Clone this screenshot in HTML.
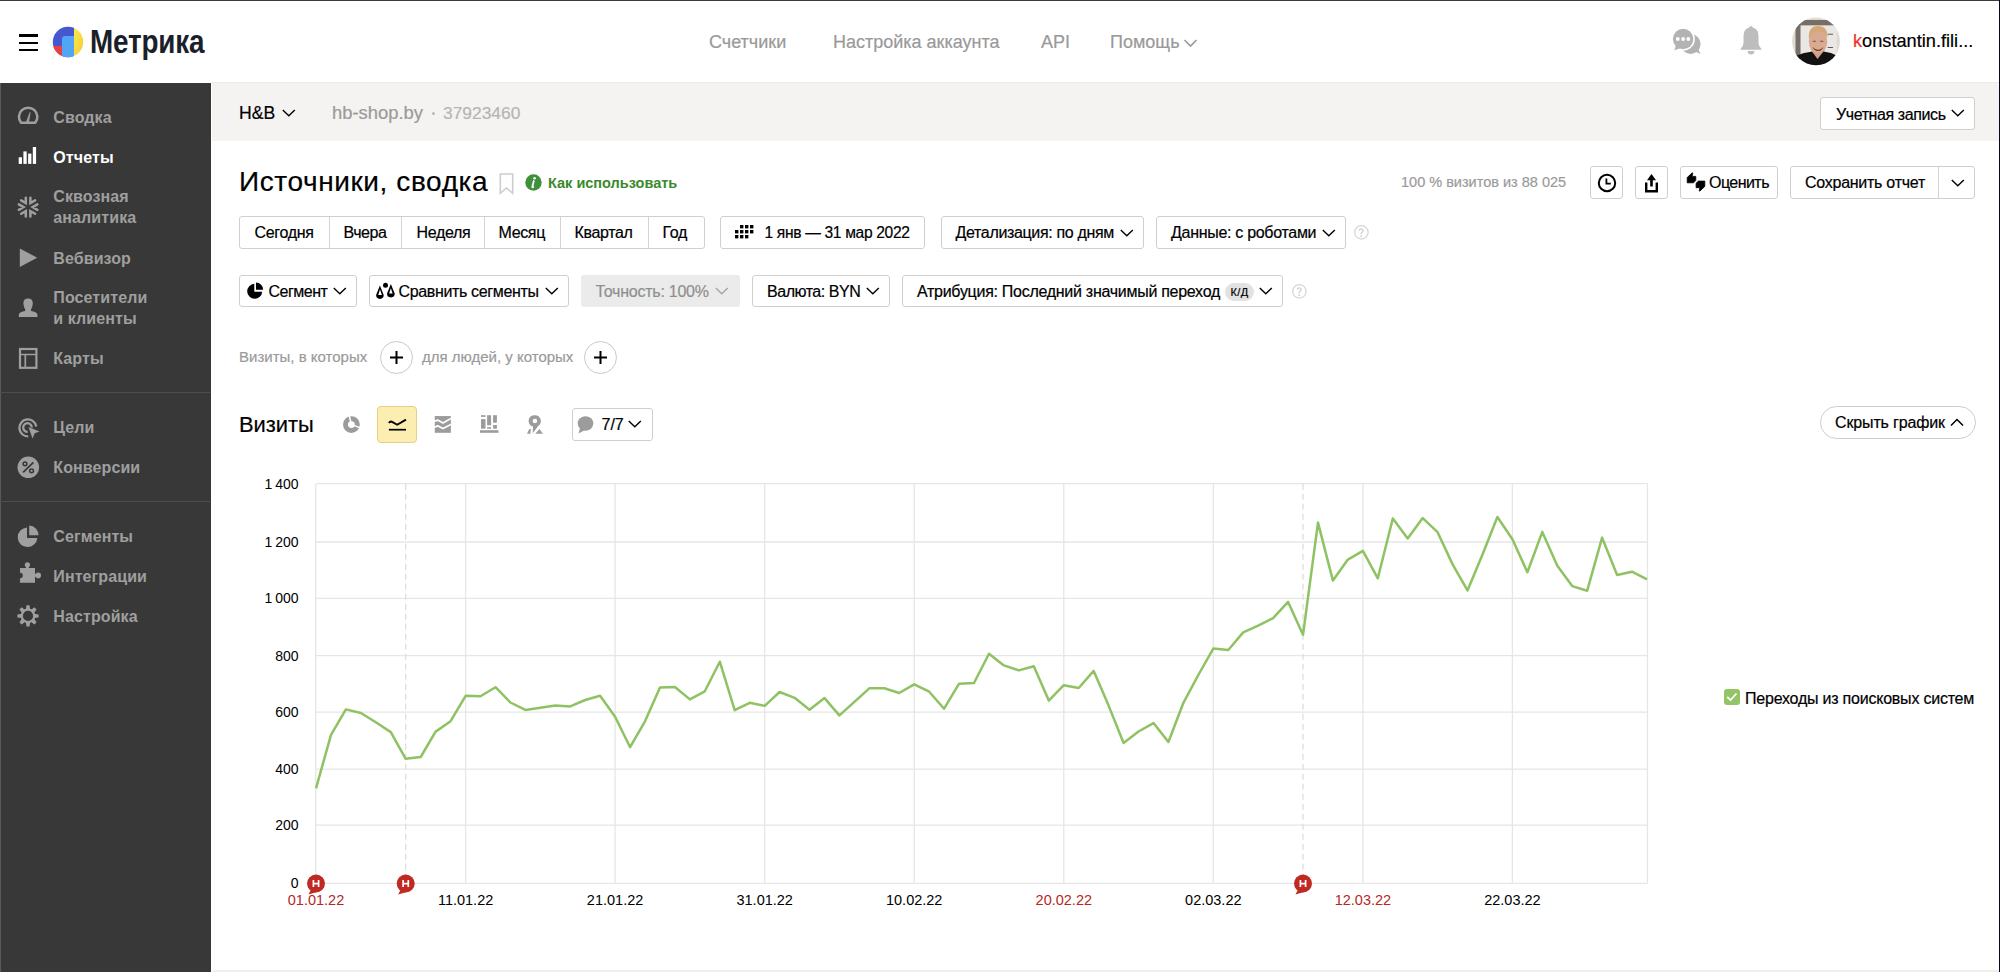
<!DOCTYPE html>
<html><head><meta charset="utf-8">
<style>
*{box-sizing:border-box}
html,body{-webkit-text-stroke:0.2px currentColor;margin:0;padding:0;width:2000px;height:972px;overflow:hidden;background:#fff;font-family:"Liberation Sans",sans-serif;color:#000}
.a{position:absolute;white-space:nowrap}
#frame-top{position:absolute;left:0;top:0;width:2000px;height:1px;background:#3a3a44}
#frame-right{position:absolute;right:0;top:0;width:1px;height:972px;background:#0b0620}
#header{position:absolute;left:0;top:1px;width:2000px;height:81px;background:#fff}
#sidebar{position:absolute;left:0;top:83px;width:211px;height:889px;background:#383838;border-left:1px solid #5a5a5a}
#bar{position:absolute;left:212px;top:82px;width:1787px;height:59px;background:#f4f3f1;border-top:1px solid #ebebeb}
.nav{font-size:18px;color:#999}
.side{-webkit-text-stroke:0;font-size:16px;font-weight:bold;color:#9f9f9f;letter-spacing:0.1px}
.btn{position:absolute;border:1px solid #cfcfcf;border-radius:3px;background:#fff;font-size:16px;white-space:nowrap}
.chev{display:inline-block;width:8px;height:8px;border-right:1.5px solid #000;border-bottom:1.5px solid #000;transform:rotate(45deg)}
</style></head><body>
<div id="frame-top"></div>
<div id="header">
<div class="a" style="left:19px;top:33.4px;width:19px;height:2.5px;background:#000"></div>
<div class="a" style="left:19px;top:40.6px;width:19px;height:2.5px;background:#000"></div>
<div class="a" style="left:19px;top:47.9px;width:19px;height:2.5px;background:#000"></div>
<svg class="a" style="left:52px;top:25.3px" width="32" height="32" viewBox="0 0 32 32">
<defs><clipPath id="lc"><circle cx="16" cy="16" r="15.2"/></clipPath>
<linearGradient id="ly" x1="0" y1="0" x2="1" y2="1"><stop offset="0" stop-color="#ffe94a"/><stop offset="1" stop-color="#f0c83a"/></linearGradient></defs>
<g clip-path="url(#lc)">
<rect x="0" y="0" width="22" height="32" fill="#4657cf"/>
<rect x="0" y="20" width="12" height="12" fill="#e8413f"/>
<path d="M10 32 V13 Q10 10 13 10 H22 V32 Z" fill="#50a6f5"/>
<rect x="22" y="0" width="10" height="32" fill="url(#ly)"/>
</g></svg>
<div class="a" style="left:90px;top:21.5px;-webkit-text-stroke:0;font-size:32.8px;font-weight:bold;color:#1b1f2a;transform:scaleX(0.85);transform-origin:0 0;letter-spacing:-0.2px">Метрика</div>
<div class="a nav" style="left:709px;top:31px">Счетчики</div>
<div class="a nav" style="left:833px;top:31px">Настройка аккаунта</div>
<div class="a nav" style="left:1041px;top:31px">API</div>
<div class="a nav" style="left:1110px;top:31px">Помощь</div>
<svg class="a" style="left:1183px;top:37px" width="15" height="10" viewBox="0 0 15 10"><path d="M1.5 2 L7.5 8 L13.5 2" fill="none" stroke="#999" stroke-width="1.6"/></svg>
</div>
<div id="sidebar"></div><div class="a" style="left:0;top:0">
<svg class="a" style="left:16px;top:105px" width="24" height="21" viewBox="0 0 24 21"><path d="M5.01 17.65 A9.2 9.2 0 1 1 19.29 17.65 Z" fill="none" stroke="#9f9f9f" stroke-width="2.5" stroke-linejoin="round"/><path d="M9.9 17.6 L13.6 7.4 Q14.2 6.9 14.6 7.5 L12.9 17.6 Z" fill="#9f9f9f"/></svg>
<div class="a side" style="left:53.3px;top:109px">Сводка</div>
<svg class="a" style="left:18px;top:147px" width="19" height="18" viewBox="0 0 19 18"><rect x="0.7" y="10.3" width="3.3" height="6.6" fill="#fff"/><rect x="5.4" y="4.4" width="3.3" height="12.5" fill="#fff"/><rect x="10.1" y="6.6" width="3.3" height="10.3" fill="#fff"/><rect x="14.8" y="0" width="3.3" height="16.9" fill="#fff"/></svg>
<div class="a side" style="left:53.3px;top:149px;color:#fff">Отчеты</div>
<svg class="a" style="left:14px;top:193px" width="28" height="28" viewBox="0 0 28 28"><path d="M23.38 11.40 L18.70 14.10 L23.38 16.80 M21.08 20.78 L16.40 18.08 L16.40 23.48 M11.80 23.48 L11.80 18.08 L7.12 20.78 M4.82 16.80 L9.50 14.10 L4.82 11.40 M7.12 7.42 L11.80 10.12 L11.80 4.72 M16.40 4.72 L16.40 10.12 L21.08 7.42 " fill="none" stroke="#9f9f9f" stroke-width="2.5" stroke-linecap="round" stroke-linejoin="miter"/></svg>
<div class="a side" style="left:53.3px;top:186.3px;line-height:21px">Сквозная<br>аналитика</div>
<svg class="a" style="left:19px;top:248px" width="19" height="20" viewBox="0 0 19 20"><path d="M0.8 0.4 L18.2 9.7 L0.8 19 Z" fill="#9f9f9f"/></svg>
<div class="a side" style="left:53.3px;top:250px">Вебвизор</div>
<svg class="a" style="left:14px;top:294px" width="28" height="28" viewBox="0 0 28 28"><path d="M14.1 4.6 Q18.9 4.6 18.8 9.5 Q18.6 13 17 15.5 L17 16.9 Q22.8 18 23.3 20 L23.5 23 H4.75 L4.9 20 Q5.5 18 11.2 16.9 L11.2 15.5 Q9.6 13 9.4 9.5 Q9.3 4.6 14.1 4.6 Z" fill="#9f9f9f"/></svg>
<div class="a side" style="left:53.3px;top:287.2px;line-height:21px">Посетители<br>и клиенты</div>
<svg class="a" style="left:14px;top:344px" width="28" height="28" viewBox="0 0 28 28"><rect x="6" y="5" width="16.4" height="18.8" fill="none" stroke="#9f9f9f" stroke-width="2.2"/><path d="M6 10.5 H22.4" stroke="#9f9f9f" stroke-width="1.5"/><path d="M11.3 10.5 V23.8" stroke="#9f9f9f" stroke-width="1.7"/></svg>
<div class="a side" style="left:53.3px;top:350px">Карты</div>
<div class="a" style="left:0;top:392px;width:210px;height:1.2px;background:#4e4e4e"></div>
<svg class="a" style="left:16.8px;top:416.5px" width="24" height="23" viewBox="0 0 24 23"><path d="M19.3 9.5 A8.5 8.5 0 1 0 11.2 19.4" fill="none" stroke="#9f9f9f" stroke-width="2.3"/><path d="M14.8 10.5 A4.3 4.3 0 1 0 10.6 14.8" fill="none" stroke="#9f9f9f" stroke-width="2.3"/><path d="M11.5 10 L22.5 14.5 L17.7 16.2 L15.5 21.5 Z" fill="#9f9f9f"/></svg>
<div class="a side" style="left:53.3px;top:419px">Цели</div>
<svg class="a" style="left:17px;top:456px" width="23" height="23" viewBox="0 0 23 23"><circle cx="11.3" cy="11.3" r="10.8" fill="#9f9f9f"/><path d="M6.1 16.4 L16.4 6.4" stroke="#383838" stroke-width="1.7"/><circle cx="8" cy="7.8" r="1.9" fill="none" stroke="#383838" stroke-width="1.5"/><circle cx="14.6" cy="14.8" r="1.9" fill="none" stroke="#383838" stroke-width="1.5"/></svg>
<div class="a side" style="left:53.3px;top:459px">Конверсии</div>
<div class="a" style="left:0;top:501px;width:210px;height:1.2px;background:#4e4e4e"></div>
<svg class="a" style="left:17px;top:525px" width="23" height="23" viewBox="0 0 23 23"><path d="M10 2.5 A9.8 9.8 0 1 0 20.3 13 L10 13 Z" fill="#9f9f9f"/><path d="M12.2 0.6 A9.6 9.6 0 0 1 21.5 10.3 L12.2 10.3 Z" fill="#9f9f9f"/></svg>
<div class="a side" style="left:53.3px;top:528px">Сегменты</div>
<svg class="a" style="left:14px;top:558px" width="30" height="30" viewBox="0 0 30 30"><circle cx="13.4" cy="6.8" r="2.6" fill="#9f9f9f"/><rect x="12" y="8" width="2.8" height="3" fill="#9f9f9f"/><circle cx="24.2" cy="17.4" r="2.8" fill="#9f9f9f"/><rect x="20" y="16" width="3" height="2.8" fill="#9f9f9f"/><path d="M6 9.9 H21 V24.8 H6 V20.4 A2.8 2.8 0 0 0 6 14.8 Z" fill="#9f9f9f"/></svg>
<div class="a side" style="left:53.3px;top:568px">Интеграции</div>
<svg class="a" style="left:14px;top:600px" width="30" height="30" viewBox="0 0 30 30"><g fill="#9f9f9f"><path d="M-2.2 -6 L-1.5 -10.6 H1.5 L2.2 -6 Z" transform="translate(14.0,15.9) rotate(0)"/><path d="M-2.2 -6 L-1.5 -10.6 H1.5 L2.2 -6 Z" transform="translate(14.0,15.9) rotate(45)"/><path d="M-2.2 -6 L-1.5 -10.6 H1.5 L2.2 -6 Z" transform="translate(14.0,15.9) rotate(90)"/><path d="M-2.2 -6 L-1.5 -10.6 H1.5 L2.2 -6 Z" transform="translate(14.0,15.9) rotate(135)"/><path d="M-2.2 -6 L-1.5 -10.6 H1.5 L2.2 -6 Z" transform="translate(14.0,15.9) rotate(180)"/><path d="M-2.2 -6 L-1.5 -10.6 H1.5 L2.2 -6 Z" transform="translate(14.0,15.9) rotate(225)"/><path d="M-2.2 -6 L-1.5 -10.6 H1.5 L2.2 -6 Z" transform="translate(14.0,15.9) rotate(270)"/><path d="M-2.2 -6 L-1.5 -10.6 H1.5 L2.2 -6 Z" transform="translate(14.0,15.9) rotate(315)"/></g><circle cx="14.0" cy="15.9" r="6.2" fill="none" stroke="#9f9f9f" stroke-width="2.2"/></svg>
<div class="a side" style="left:53.3px;top:608px">Настройка</div>
</div>
<div id="bar"></div>

<!-- gray bar -->
<div class="a" style="left:239px;top:102.5px;font-size:17.6px;color:#000">H&amp;B</div>
<svg class="a" style="left:281.5px;top:109px" width="14" height="8" viewBox="0 0 14 8"><path d="M0.8 1 L6.8 6.8 L12.8 1" fill="none" stroke="#000" stroke-width="1.4"/></svg>
<div class="a" style="left:332px;top:102px;font-size:18.4px;color:#9a9a9a">hb-shop.by</div>
<div class="a" style="left:432px;top:112px;width:3px;height:3px;border-radius:50%;background:#b8b8b8"></div>
<div class="a" style="left:443px;top:102.5px;font-size:17.4px;color:#b5b5b5">37923460</div>
<div class="btn" style="left:1820px;top:97px;width:155px;height:33px"></div>
<div class="a" style="left:1836px;top:105.5px;font-size:16px;letter-spacing:-0.4px">Учетная запись</div>
<svg class="a" style="left:1950.5px;top:109px" width="14" height="8" viewBox="0 0 14 8"><path d="M0.8 1 L6.8 6.8 L12.8 1" fill="none" stroke="#000" stroke-width="1.4"/></svg>
<!-- title row -->
<div class="a" style="left:239px;top:165.5px;font-size:28px;letter-spacing:0.6px">Источники, сводка</div>
<svg class="a" style="left:499px;top:173px" width="15" height="22" viewBox="0 0 15 22"><path d="M1.3 1 H13.7 V20.3 L7.5 15 L1.3 20.3 Z" fill="none" stroke="#cdcdcd" stroke-width="1.6"/></svg>
<svg class="a" style="left:525px;top:174px" width="17" height="17" viewBox="0 0 17 17"><circle cx="8.5" cy="8.5" r="8.2" fill="#3f8f3c"/><circle cx="9.6" cy="4.3" r="1.3" fill="#fff"/><path d="M8.8 7 L7.3 12.8 Q7 13.8 8.3 13" fill="none" stroke="#fff" stroke-width="1.8" stroke-linecap="round"/></svg>
<div class="a" style="left:548px;top:175px;-webkit-text-stroke:0;font-size:14.5px;font-weight:bold;color:#3a8a2c">Как использовать</div>
<div class="a" style="left:1401px;top:174px;font-size:14.5px;color:#9a9a9a">100 % визитов из 88 025</div>
<div class="btn" style="left:1590px;top:166px;width:33px;height:33px"></div>
<svg class="a" style="left:1597px;top:173px" width="20" height="20" viewBox="0 0 20 20"><circle cx="10" cy="10" r="8.2" fill="none" stroke="#000" stroke-width="2"/><path d="M9.4 5.5 V10.6 H13.8" fill="none" stroke="#000" stroke-width="1.8"/></svg>
<div class="btn" style="left:1635px;top:166px;width:33px;height:33px"></div>
<svg class="a" style="left:1644px;top:173px" width="15" height="21" viewBox="0 0 15 21"><path d="M7.5 1 L12 7.3 H3 Z" fill="#000"/><rect x="6.2" y="6.5" width="2.6" height="7" fill="#000"/><path d="M2.2 9.5 V18.2 H12.8 V9.5" fill="none" stroke="#000" stroke-width="2.4"/></svg>
<div class="btn" style="left:1680px;top:166px;width:98px;height:33px"></div>
<svg class="a" style="left:1682px;top:168px" width="30" height="28" viewBox="0 0 30 28"><path d="M5.2 9.5 L10 5 Q10.9 4.5 10.7 5.6 L10.1 8.4 H13.8 V12.4 L11.5 14.8 H5.2 Z" fill="#000" stroke="#000" stroke-width="0.8" stroke-linejoin="round"/><path d="M22.8 18.4 L18 23 Q17.1 23.5 17.3 22.4 L17.9 19.7 H14.1 V15.3 L16.4 13.1 H22.8 Z" fill="#000" stroke="#000" stroke-width="0.8" stroke-linejoin="round"/></svg>
<div class="a" style="left:1709px;top:174px;font-size:16px;letter-spacing:-0.55px">Оценить</div>
<div class="btn" style="left:1790px;top:166px;width:185px;height:33px"></div>
<div class="a" style="left:1938px;top:167px;width:1px;height:31px;background:#d4d4d4"></div>
<div class="a" style="left:1805px;top:174px;font-size:16px;letter-spacing:-0.26px">Сохранить отчет</div>
<svg class="a" style="left:1950.5px;top:179px" width="14" height="8" viewBox="0 0 14 8"><path d="M0.8 1 L6.8 6.8 L12.8 1" fill="none" stroke="#000" stroke-width="1.4"/></svg>
<!-- row 2 -->
<div class="btn" style="left:239px;top:216px;width:466px;height:33px"></div>
<div class="a" style="left:329px;top:217px;width:1px;height:31px;background:#d4d4d4"></div>
<div class="a" style="left:401px;top:217px;width:1px;height:31px;background:#d4d4d4"></div>
<div class="a" style="left:484px;top:217px;width:1px;height:31px;background:#d4d4d4"></div>
<div class="a" style="left:560px;top:217px;width:1px;height:31px;background:#d4d4d4"></div>
<div class="a" style="left:648px;top:217px;width:1px;height:31px;background:#d4d4d4"></div>
<div class="a" style="left:254.5px;top:224px;font-size:16px;letter-spacing:-0.33px">Сегодня</div>
<div class="a" style="left:343.5px;top:224px;font-size:16px;letter-spacing:-0.45px">Вчера</div>
<div class="a" style="left:416.5px;top:224px;font-size:16px;letter-spacing:-0.35px">Неделя</div>
<div class="a" style="left:498.5px;top:224px;font-size:16px;letter-spacing:-0.35px">Месяц</div>
<div class="a" style="left:574.5px;top:224px;font-size:16px;letter-spacing:-0.35px">Квартал</div>
<div class="a" style="left:662.5px;top:224px;font-size:16px;letter-spacing:-0.35px">Год</div>
<div class="btn" style="left:720px;top:216px;width:205px;height:33px"></div>
<svg class="a" style="left:735px;top:225px" width="19" height="14" viewBox="0 0 19 14"><g fill="#000"><rect x="5.0" y="0.0" width="3.4" height="3.4"/><rect x="10.0" y="0.0" width="3.4" height="3.4"/><rect x="15.0" y="0.0" width="3.4" height="3.4"/><rect x="0.0" y="5.0" width="3.4" height="3.4"/><rect x="5.0" y="5.0" width="3.4" height="3.4"/><rect x="10.0" y="5.0" width="3.4" height="3.4"/><rect x="15.0" y="5.0" width="3.4" height="3.4"/><rect x="0.0" y="10.0" width="3.4" height="3.4"/><rect x="5.0" y="10.0" width="3.4" height="3.4"/><rect x="10.0" y="10.0" width="3.4" height="3.4"/></g></svg>
<div class="a" style="left:764.5px;top:223.5px;font-size:15.6px;letter-spacing:-0.33px">1 янв — 31 мар 2022</div>
<div class="btn" style="left:941px;top:216px;width:203px;height:33px"></div>
<div class="a" style="left:955.5px;top:224px;font-size:16px;letter-spacing:-0.34px">Детализация: по дням</div>
<svg class="a" style="left:1120px;top:229px" width="14" height="8" viewBox="0 0 14 8"><path d="M0.8 1 L6.8 6.8 L12.8 1" fill="none" stroke="#000" stroke-width="1.4"/></svg>
<div class="btn" style="left:1156px;top:216px;width:190px;height:33px"></div>
<div class="a" style="left:1171px;top:224px;font-size:16px;letter-spacing:-0.3px">Данные: с роботами</div>
<svg class="a" style="left:1322px;top:229px" width="14" height="8" viewBox="0 0 14 8"><path d="M0.8 1 L6.8 6.8 L12.8 1" fill="none" stroke="#000" stroke-width="1.4"/></svg>
<svg class="a" style="left:1353px;top:225px" width="16" height="16" viewBox="0 0 16 16"><circle cx="8.4" cy="7.4" r="6.7" fill="none" stroke="#d6d6d6" stroke-width="1.3"/><path d="M6.3 5.6 Q6.4 3.8 8.3 3.8 Q10.1 3.9 10.1 5.5 Q10.1 6.5 9.1 7.2 Q8.1 7.9 8.1 9.3" fill="none" stroke="#d0d0d0" stroke-width="1.3"/><circle cx="8.1" cy="11.2" r="0.85" fill="#d0d0d0"/></svg>
<!-- row 3 -->
<div class="btn" style="left:239px;top:275px;width:118px;height:32px"></div>
<svg class="a" style="left:247px;top:282px" width="17" height="18" viewBox="0 0 17 18"><path d="M7.3 1.8 A7.5 7.5 0 1 0 15.2 9.8 L7.3 9.8 Z" fill="#000"/><path d="M9 0.5 A7.2 7.2 0 0 1 16.2 7.8 L9 7.8 Z" fill="#000"/></svg>
<div class="a" style="left:268.5px;top:283px;font-size:16px;letter-spacing:-0.5px">Сегмент</div>
<svg class="a" style="left:333px;top:287px" width="14" height="8" viewBox="0 0 14 8"><path d="M0.8 1 L6.8 6.8 L12.8 1" fill="none" stroke="#000" stroke-width="1.4"/></svg>
<div class="btn" style="left:369px;top:275px;width:200px;height:32px"></div>
<svg class="a" style="left:372px;top:278px" width="26" height="26" viewBox="0 0 26 26"><circle cx="13.5" cy="7.35" r="2.5" fill="#000"/><path d="M7.9 7.6 L4.10 17.1 A3.8 3.8 0 0 0 11.70 17.1 Z" fill="#000"/><path d="M8 11.5 L6.2 17.1 H9.9 Z" fill="#fff"/><path d="M18.85 6.1 L15.00 15.6 A3.85 3.85 0 0 0 22.70 15.6 Z" fill="#000"/><path d="M18.85 10.2 L17.1 15.5 H20.6 Z" fill="#fff"/></svg>
<div class="a" style="left:398.5px;top:283px;font-size:16px;letter-spacing:-0.35px">Сравнить сегменты</div>
<svg class="a" style="left:544.5px;top:287px" width="14" height="8" viewBox="0 0 14 8"><path d="M0.8 1 L6.8 6.8 L12.8 1" fill="none" stroke="#000" stroke-width="1.4"/></svg>
<div class="a" style="left:581px;top:275px;width:159px;height:32px;background:#ebebeb;border-radius:3px"></div>
<div class="a" style="left:595.5px;top:283px;font-size:16px;letter-spacing:-0.24px;color:#8f8f8f">Точность: 100%</div>
<svg class="a" style="left:714.5px;top:287px" width="14" height="8" viewBox="0 0 14 8"><path d="M0.8 1 L6.8 6.8 L12.8 1" fill="none" stroke="#a5a5a5" stroke-width="1.4"/></svg>
<div class="btn" style="left:752px;top:275px;width:138px;height:32px"></div>
<div class="a" style="left:767px;top:283px;font-size:16px;letter-spacing:-0.47px">Валюта: BYN</div>
<svg class="a" style="left:865.5px;top:287px" width="14" height="8" viewBox="0 0 14 8"><path d="M0.8 1 L6.8 6.8 L12.8 1" fill="none" stroke="#000" stroke-width="1.4"/></svg>
<div class="btn" style="left:902px;top:275px;width:381px;height:32px"></div>
<div class="a" style="left:917px;top:283px;font-size:16px;letter-spacing:-0.28px">Атрибуция: Последний значимый переход</div>
<div class="a" style="left:1225px;top:283.3px;width:29px;height:17.5px;border-radius:9px;background:#e2e2e2;font-size:11px;text-align:center;line-height:18px;letter-spacing:0.3px">К/Д</div>
<svg class="a" style="left:1258.5px;top:287px" width="14" height="8" viewBox="0 0 14 8"><path d="M0.8 1 L6.8 6.8 L12.8 1" fill="none" stroke="#000" stroke-width="1.4"/></svg>
<svg class="a" style="left:1291px;top:284px" width="16" height="16" viewBox="0 0 16 16"><circle cx="8.4" cy="7.4" r="6.7" fill="none" stroke="#d6d6d6" stroke-width="1.3"/><path d="M6.3 5.6 Q6.4 3.8 8.3 3.8 Q10.1 3.9 10.1 5.5 Q10.1 6.5 9.1 7.2 Q8.1 7.9 8.1 9.3" fill="none" stroke="#d0d0d0" stroke-width="1.3"/><circle cx="8.1" cy="11.2" r="0.85" fill="#d0d0d0"/></svg>
<!-- row 4 -->
<div class="a" style="left:239px;top:348px;font-size:15px;color:#9a9a9a">Визиты, в которых</div>
<div class="a" style="left:380px;top:341px;width:33px;height:33px;border:1.2px solid #c9c9c9;border-radius:50%"></div>
<svg class="a" style="left:388.5px;top:350.2px" width="15" height="15" viewBox="0 0 15 15"><path d="M7.5 1 V14 M1 7.5 H14" stroke="#000" stroke-width="2"/></svg>
<div class="a" style="left:422px;top:348px;font-size:15px;color:#9a9a9a">для людей, у которых</div>
<div class="a" style="left:584px;top:341px;width:33px;height:33px;border:1.2px solid #c9c9c9;border-radius:50%"></div>
<svg class="a" style="left:592.5px;top:350.2px" width="15" height="15" viewBox="0 0 15 15"><path d="M7.5 1 V14 M1 7.5 H14" stroke="#000" stroke-width="2"/></svg>
<!-- row 5 -->
<div class="a" style="left:239px;top:411.5px;font-size:21.9px">Визиты</div>
<svg class="a" style="left:0;top:0" width="2000" height="972" viewBox="0 0 2000 972" font-family="Liberation Sans">
<path d="M316 883.3 H1647.5" stroke="#e6e6e6" stroke-width="1.3"/><path d="M316 825.2 H1647.5" stroke="#e6e6e6" stroke-width="1.3"/><path d="M316 769.2 H1647.5" stroke="#e6e6e6" stroke-width="1.3"/><path d="M316 712.2 H1647.5" stroke="#e6e6e6" stroke-width="1.3"/><path d="M316 655.6 H1647.5" stroke="#e6e6e6" stroke-width="1.3"/><path d="M316 598.4 H1647.5" stroke="#e6e6e6" stroke-width="1.3"/><path d="M316 542.0 H1647.5" stroke="#e6e6e6" stroke-width="1.3"/><path d="M316 483.7 H1647.5" stroke="#e6e6e6" stroke-width="1.3"/><path d="M465.6 483.7 V883.3" stroke="#e6e6e6" stroke-width="1.3"/><path d="M615.1 483.7 V883.3" stroke="#e6e6e6" stroke-width="1.3"/><path d="M764.7 483.7 V883.3" stroke="#e6e6e6" stroke-width="1.3"/><path d="M914.2 483.7 V883.3" stroke="#e6e6e6" stroke-width="1.3"/><path d="M1063.8 483.7 V883.3" stroke="#e6e6e6" stroke-width="1.3"/><path d="M1213.3 483.7 V883.3" stroke="#e6e6e6" stroke-width="1.3"/><path d="M1362.9 483.7 V883.3" stroke="#e6e6e6" stroke-width="1.3"/><path d="M1512.4 483.7 V883.3" stroke="#e6e6e6" stroke-width="1.3"/><path d="M315.8 483.7 V883.3" stroke="#e6e6e6" stroke-width="1.3"/><path d="M1647.5 483.7 V883.3" stroke="#e6e6e6" stroke-width="1.3"/><path d="M405.7 483.7 V883.3" stroke="#dedede" stroke-width="1.3" stroke-dasharray="6 4"/><path d="M1303.0 483.7 V883.3" stroke="#dedede" stroke-width="1.3" stroke-dasharray="6 4"/>
<polyline points="316.0,788.4 331.0,734.8 345.9,709.4 360.9,713.0 375.8,722.2 390.8,732.1 405.7,758.8 420.7,757.0 435.6,731.6 450.6,721.2 465.6,695.8 480.5,696.3 495.5,687.2 510.4,702.5 525.4,709.9 540.3,707.7 555.3,705.4 570.2,706.4 585.2,700.0 600.1,695.8 615.1,716.7 630.1,747.2 645.0,721.3 660.0,687.6 674.9,687.0 689.9,699.4 704.8,691.3 719.8,661.7 734.7,710.2 749.7,702.8 764.7,705.9 779.6,692.0 794.6,697.8 809.5,709.8 824.5,698.1 839.4,715.4 854.4,701.9 869.3,688.3 884.3,688.3 899.2,693.0 914.2,684.3 929.2,691.7 944.1,708.7 959.1,683.7 974.0,683.0 989.0,653.7 1003.9,665.4 1018.9,670.4 1033.8,666.3 1048.8,700.6 1063.8,685.2 1078.7,688.0 1093.7,670.9 1108.6,705.6 1123.6,743.0 1138.5,731.5 1153.5,723.1 1168.4,742.0 1183.4,702.8 1198.3,675.0 1213.3,648.6 1228.3,650.0 1243.2,632.4 1258.2,625.6 1273.1,618.1 1288.1,601.9 1303.0,634.8 1318.0,522.6 1332.9,580.6 1347.9,559.6 1362.9,550.9 1377.8,578.3 1392.8,518.5 1407.7,538.5 1422.7,518.1 1437.6,532.2 1452.6,564.4 1467.5,590.4 1482.5,554.6 1497.4,517.0 1512.4,539.3 1527.4,572.2 1542.3,531.9 1557.3,565.7 1572.2,586.1 1587.2,590.7 1602.1,537.6 1617.1,575.0 1632.0,571.7 1647.0,579.3" fill="none" stroke="#8ec262" stroke-width="2.5" stroke-linejoin="round"/>
<text x="298.5" y="888.3" text-anchor="end" font-size="14" fill="#000">0</text><text x="298.5" y="830.2" text-anchor="end" font-size="14" fill="#000">200</text><text x="298.5" y="774.2" text-anchor="end" font-size="14" fill="#000">400</text><text x="298.5" y="717.2" text-anchor="end" font-size="14" fill="#000">600</text><text x="298.5" y="660.6" text-anchor="end" font-size="14" fill="#000">800</text><text x="298.5" y="603.4" text-anchor="end" font-size="14" fill="#000">1&#8201;000</text><text x="298.5" y="547.0" text-anchor="end" font-size="14" fill="#000">1&#8201;200</text><text x="298.5" y="488.7" text-anchor="end" font-size="14" fill="#000">1&#8201;400</text>
<text x="316.0" y="905" text-anchor="middle" font-size="14.5" fill="#b5281f">01.01.22</text><text x="465.6" y="905" text-anchor="middle" font-size="14.5" fill="#000">11.01.22</text><text x="615.1" y="905" text-anchor="middle" font-size="14.5" fill="#000">21.01.22</text><text x="764.7" y="905" text-anchor="middle" font-size="14.5" fill="#000">31.01.22</text><text x="914.2" y="905" text-anchor="middle" font-size="14.5" fill="#000">10.02.22</text><text x="1063.8" y="905" text-anchor="middle" font-size="14.5" fill="#b5281f">20.02.22</text><text x="1213.3" y="905" text-anchor="middle" font-size="14.5" fill="#000">02.03.22</text><text x="1362.9" y="905" text-anchor="middle" font-size="14.5" fill="#b5281f">12.03.22</text><text x="1512.4" y="905" text-anchor="middle" font-size="14.5" fill="#000">22.03.22</text>
<g transform="translate(316.0,883.5)"><path d="M-5 6 L-7.5 11 L1 8.5 Z" fill="#c02a22"/><circle cx="0" cy="0" r="9" fill="#c02a22"/><path d="M-2.6 -3.4 V3.6 M2.6 -3.4 V3.6 M-2.6 0.2 H2.6" stroke="#fff" stroke-width="1.7"/></g><g transform="translate(405.7,883.5)"><path d="M-5 6 L-7.5 11 L1 8.5 Z" fill="#c02a22"/><circle cx="0" cy="0" r="9" fill="#c02a22"/><path d="M-2.6 -3.4 V3.6 M2.6 -3.4 V3.6 M-2.6 0.2 H2.6" stroke="#fff" stroke-width="1.7"/></g><g transform="translate(1303.0,883.5)"><path d="M-5 6 L-7.5 11 L1 8.5 Z" fill="#c02a22"/><circle cx="0" cy="0" r="9" fill="#c02a22"/><path d="M-2.6 -3.4 V3.6 M2.6 -3.4 V3.6 M-2.6 0.2 H2.6" stroke="#fff" stroke-width="1.7"/></g>
</svg>
<svg class="a" style="left:338px;top:410px" width="26" height="28" viewBox="0 0 26 28"><circle cx="13.4" cy="14.55" r="5.9" fill="none" stroke="#9c9c9c" stroke-width="5"/><path d="M13.4 14.55 L11.2 5.5 M13.4 14.55 L21.8 17.6" stroke="#fff" stroke-width="1.5"/></svg>
<div class="a" style="left:377px;top:406px;width:40px;height:37px;background:#fbeeb0;border:1px solid #e3cf86;border-radius:4px"></div>
<svg class="a" style="left:388px;top:417px" width="19" height="16" viewBox="0 0 19 16"><path d="M0.9 6.1 Q2 4.3 3.6 4.6 L9.2 7.75 L18 2.6" fill="none" stroke="#000" stroke-width="1.9" stroke-linejoin="round"/><path d="M0.9 12.7 H18" stroke="#000" stroke-width="1.7"/></svg>
<svg class="a" style="left:434px;top:416px" width="18" height="17" viewBox="0 0 18 17"><rect x="0.75" y="0.05" width="16.15" height="16.75" fill="#9c9c9c"/><path d="M0 5.4 L3.6 4.1 L9 6.9 L18 1.9 M0 11.3 L3.6 9.85 L9 12.6 L18 7.9" fill="none" stroke="#fff" stroke-width="1.7" stroke-linejoin="round"/></svg>
<svg class="a" style="left:476px;top:410px" width="26" height="28" viewBox="0 0 26 28"><g fill="#9c9c9c"><rect x="5" y="5.2" width="4.5" height="1.7"/><rect x="5" y="9.1" width="4.5" height="9.6"/><rect x="11.1" y="5.2" width="4" height="10.1"/><rect x="11.1" y="17.1" width="4" height="1.6"/><rect x="17.1" y="5.2" width="3.8" height="7.5"/><rect x="17.1" y="15" width="3.8" height="3.7"/><rect x="4" y="20.2" width="18.5" height="2.6"/></g></svg>
<svg class="a" style="left:522px;top:410px" width="26" height="28" viewBox="0 0 26 28"><path d="M13 5.2 A5.8 5.8 0 0 1 16.6 15.6 L10.7 23.3 L11 16.6 A5.8 5.8 0 0 1 13 5.2 Z" fill="#9c9c9c"/><circle cx="12.9" cy="11" r="2.3" fill="#fff"/><path d="M5 23.8 L7.3 19 H8.9 L8.4 23.8 Z M13.3 23.8 L17.4 19 L20.9 23.8 Z" fill="#9c9c9c"/></svg>
<div class="btn" style="left:572px;top:408px;width:81px;height:33px"></div>
<svg class="a" style="left:577px;top:416px" width="17" height="18" viewBox="0 0 17 18"><ellipse cx="8.5" cy="7.5" rx="7.8" ry="7.3" fill="#9c9c9c"/><path d="M3 12 L1.5 17.5 L8 14 Z" fill="#9c9c9c"/></svg>
<div class="a" style="left:601.5px;top:415.5px;font-size:16px">7/7</div>
<svg class="a" style="left:628px;top:420.3px" width="14" height="8" viewBox="0 0 14 8"><path d="M0.8 1 L6.8 6.8 L12.8 1" fill="none" stroke="#000" stroke-width="1.4"/></svg>
<div class="a" style="left:1820px;top:406px;width:156px;height:33px;border:1px solid #cdcdcd;border-radius:17px"></div>
<div class="a" style="left:1835px;top:414px;font-size:16px;letter-spacing:-0.14px">Скрыть график</div>
<svg class="a" style="left:1950px;top:418px" width="14" height="9" viewBox="0 0 14 9"><path d="M1 7.5 L7 1.5 L13 7.5" fill="none" stroke="#000" stroke-width="1.5"/></svg>
<div class="a" style="left:1724px;top:689px;width:16px;height:16px;border-radius:3px;background:#93c566"></div>
<svg class="a" style="left:1724px;top:689px" width="16" height="16" viewBox="0 0 16 16"><path d="M3.3 8 L6.5 11 L12.5 4.5" fill="none" stroke="#fff" stroke-width="1.8"/></svg>
<div class="a" style="left:1745px;top:690px;font-size:16px;letter-spacing:-0.22px">Переходы из поисковых систем</div>

<svg class="a" style="left:1670px;top:27px" width="34" height="30" viewBox="0 0 34 30"><circle cx="20.6" cy="17" r="10" fill="#b3b3b3"/><path d="M24 24 L30.5 27 L27.5 20 Z" fill="#b3b3b3"/><circle cx="13.1" cy="12" r="11.8" fill="#fff"/><circle cx="13.1" cy="12" r="10.2" fill="#b3b3b3"/><path d="M6 18 L4.4 23.3 L11 21 Z" fill="#b3b3b3"/><circle cx="7.8" cy="12" r="1.9" fill="#fff"/><circle cx="13.1" cy="12" r="1.9" fill="#fff"/><circle cx="18.3" cy="12" r="1.9" fill="#fff"/></svg>
<svg class="a" style="left:1739px;top:25px" width="24" height="31" viewBox="0 0 24 31"><circle cx="12" cy="3" r="1.9" fill="#bdbdbd"/><path d="M12 2.5 Q4.5 2.5 4.5 11 V18 Q4.5 21 1.5 24 V24.7 H22.5 V24 Q19.5 21 19.5 18 V11 Q19.5 2.5 12 2.5 Z" fill="#bdbdbd"/><path d="M8.5 26 H15.5 Q15 29.5 12 29.5 Q9 29.5 8.5 26 Z" fill="#bdbdbd"/></svg>
<svg class="a" style="left:1792px;top:17px" width="48" height="49" viewBox="0 0 48 49">
<defs><clipPath id="av"><circle cx="24" cy="24.3" r="23.9"/></clipPath></defs>
<g clip-path="url(#av)">
<rect width="48" height="49" fill="#dedcd2"/>
<path d="M3.5 3 H43 V8.6 H8.7 V42 H3.5 Z" fill="#776e68"/>
<rect x="8.7" y="8.6" width="36" height="34" fill="#e9e8e4"/>
<path d="M35.6 17.2 H41 M35.6 30.5 H41" stroke="#5f5a55" stroke-width="1.1"/>
<ellipse cx="26" cy="24.5" rx="9.2" ry="13" fill="#d9aa90"/>
<path d="M16.8 22 Q16 9 26 9 Q36 9 35.5 21 Q33 14.5 26 15 Q19 15 16.8 22 Z" fill="#d6a877"/>
<path d="M20.5 24.5 Q22.5 23.5 24 24.5 M28 24.5 Q29.5 23.5 31.5 24.5" stroke="#8a6a55" stroke-width="1"/>
<path d="M20.5 30 Q26 36 31.5 30 Q29.5 34 26 34 Q22.5 34 20.5 30Z" fill="#5a2f26"/>
<path d="M20 35.5 H31.5 L25.5 43 Z" fill="#cf9f86"/><path d="M0 49 V42 Q4 38 12 36 Q17 35 20 34.5 L25.5 42 L31.5 34.5 Q35 35 39 36 Q45 38 48 42 V49 Z" fill="#121212"/>
</g></svg>
<div class="a" style="left:1853px;top:31px;font-size:18.2px;color:#000"><span style="color:#f0322b">k</span>onstantin.fili...</div>
<div class="a" style="left:212px;top:970px;width:1787px;height:2px;background:#f0efed"></div>
<div id="frame-right"></div>
</body></html>
